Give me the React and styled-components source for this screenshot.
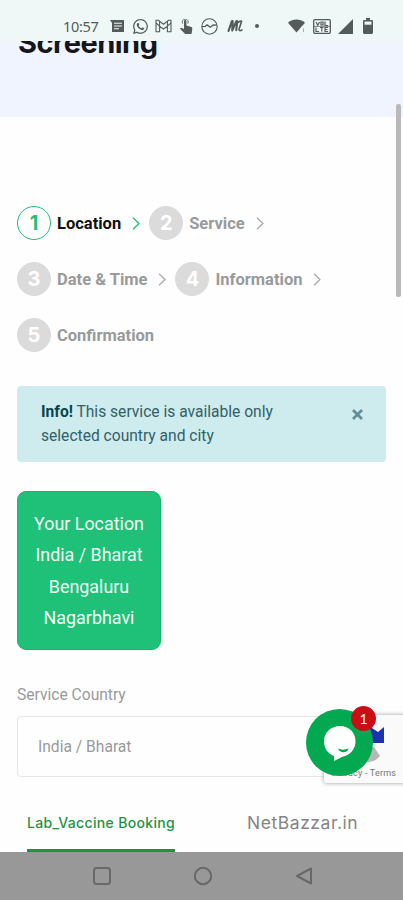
/* eslint-disable react/prop-types */
import React from 'react';
import styled, { createGlobalStyle, ThemeProvider } from 'styled-components';
import { FaWhatsapp } from 'react-icons/fa';

const theme = {
  colors: {
    accent: '#1fc077',
    muted: '#999a9b',
    circle: '#dbdbdb',
    border: '#e6e6e6',
    info: '#ceebee',
    infoText: '#326068',
    hero: '#f0f4ff',
    icon: '#555a5b',
    brand: '#1f9342',
  },
};

const GlobalStyle = createGlobalStyle`
  * { box-sizing: border-box; }

  body {
    margin: 0;
    background: #fff;
    font-family: Roboto, sans-serif;
    overflow: hidden;
  }
`;

const Screen = styled.div`
  position: relative;
  display: flex;
  flex-direction: column;
  width: 403px;
  height: 900px;
  overflow: hidden;
  background: #fefefe;
`;

const StatusBar = styled.header`
  display: flex;
  align-items: center;
  justify-content: space-between;
  flex: none;
  height: 41px;
  padding: 11px 30px 0 63px;
  color: ${({ theme }) => theme.colors.icon};
  background: #f0f7f7;
`;

const StatusGroup = styled.div`
  display: flex;
  align-items: center;
  gap: ${({ $gap }) => $gap}px;

  svg {
    display: block;
    flex: none;
  }
`;

const Clock = styled.span`
  width: 37px;
  margin-right: 3px;
  font: 400 14.5px 'Noto Sans', sans-serif;
  letter-spacing: -0.3px;
  white-space: nowrap;
`;

const Hero = styled.section`
  flex: none;
  height: 76px;
  padding-left: 18px;
  overflow: hidden;
  background: ${({ theme }) => theme.colors.hero};

  h1 {
    margin: -18px 0 0;
    color: #15161b;
    font: 700 29px/40px Inter, sans-serif;
    letter-spacing: -0.5px;
  }
`;

const Content = styled.main`
  flex: 1;
  padding: 89px 17px 0;
`;

const Steps = styled.ol`
  display: flex;
  flex-direction: column;
  gap: 22px;
  margin: 0;
  padding: 0;
`;

const StepRow = styled.div`
  display: flex;
  gap: 9px;
`;

const StepItem = styled.li`
  display: flex;
  align-items: center;
  height: 34px;
  color: ${({ $active, theme }) => ($active ? '#111' : theme.colors.muted)};
  font-size: 16.5px;
  font-weight: 700;
  white-space: nowrap;

  svg {
    margin-left: 11px;
    color: ${({ $active, theme }) => ($active ? theme.colors.accent : '#aaa')};
  }
`;

const StepCircle = styled.span`
  display: flex;
  align-items: center;
  justify-content: center;
  width: 34px;
  height: 34px;
  margin-right: 6px;
  border: 1px solid ${({ $active, theme }) => ($active ? theme.colors.accent : theme.colors.circle)};
  border-radius: 50%;
  color: ${({ $active, theme }) => ($active ? theme.colors.accent : '#fff')};
  background: ${({ $active, theme }) => ($active ? '#fff' : theme.colors.circle)};
  font: 700 20px Inter, sans-serif;
`;

const Alert = styled.div`
  display: flex;
  justify-content: space-between;
  width: 369px;
  height: 76px;
  margin-top: 34px;
  padding: 14px 23px 0 24px;
  border-radius: 4px;
  color: ${({ theme }) => theme.colors.infoText};
  background: ${({ theme }) => theme.colors.info};

  p {
    width: 250px;
    margin: 0;
    font-size: 15.6px;
    line-height: 24px;
  }

  b {
    color: #07464f;
  }

  svg {
    margin-top: 9px;
  }
`;

const LocationCard = styled.div`
  width: 144px;
  height: 159px;
  margin-top: 29px;
  padding-top: 16px;
  border: 1px solid #18b66d;
  border-radius: 9px;
  color: #effff5;
  background: ${({ theme }) => theme.colors.accent};
  font-size: 17.9px;
  line-height: 31.3px;
  text-align: center;
`;

const Label = styled.label`
  display: block;
  margin-top: 35px;
  color: ${({ theme }) => theme.colors.muted};
  font-size: 15.6px;
  line-height: 20px;
`;

const Field = styled.div`
  width: 369px;
  height: 61px;
  margin-top: 11px;
  padding-left: 20px;
  border: 1.5px solid ${({ theme }) => theme.colors.border};
  border-radius: 4px;
  color: ${({ theme }) => theme.colors.muted};
  font-size: 15.6px;
  line-height: 61px;
`;

const Tabs = styled.nav`
  display: flex;
  flex: none;
  justify-content: space-between;
  height: 58px;
  padding: 0 45px 0 27px;
  background: #fefefe;
`;

const Tab = styled.span`
  width: ${({ $width }) => $width}px;
  border-bottom: 3px solid ${({ $active, theme }) => ($active ? theme.colors.brand : 'transparent')};
  color: ${({ $active, theme }) => ($active ? theme.colors.brand : '#858585')};
  font: ${({ $active }) => ($active ? '500 14px/58px' : '400 17.5px/57px')} Inter, sans-serif;
  letter-spacing: ${({ $spacing }) => $spacing}px;
  white-space: nowrap;
`;

const NavBar = styled.footer`
  display: flex;
  align-items: center;
  flex: none;
  gap: 81px;
  height: 48px;
  padding-left: 92px;
  background: #989898;
`;

const Scrollbar = styled.div`
  position: absolute;
  top: 104px;
  right: 2px;
  width: 5px;
  height: 193px;
  border-radius: 2px;
  background: #b9b9b9;
`;

const Captcha = styled.div`
  position: absolute;
  top: 715px;
  right: -4px;
  width: 83px;
  height: 68px;
  border-radius: 3px;
  background: #fafafa;
  box-shadow: 0 0 4px #999;

  svg {
    position: absolute;
    top: 9px;
    left: 32px;
  }

  span {
    position: absolute;
    top: 52px;
    left: 8px;
    color: #777;
    font-size: 9px;
    line-height: 12px;
    letter-spacing: 0.2px;
    white-space: nowrap;
  }
`;

const ChatButton = styled.div`
  position: absolute;
  top: 709px;
  left: 306px;
  width: 67px;
  height: 67px;
  border-radius: 50%;
  background: #03a950;

  svg {
    display: block;
  }
`;

const Badge = styled.span`
  position: absolute;
  top: -3px;
  left: 45px;
  width: 25px;
  height: 25px;
  border-radius: 50%;
  color: #fff;
  background: #c90e14;
  font: 400 14px/25px Lato, sans-serif;
  text-align: center;
`;

const Chevron = () => (
  <svg width="8" height="13" viewBox="0 0 8 13" fill="none" stroke="currentColor" strokeWidth="1.3">
    <path d="M1 .8 7 6.5 1 12.2" />
  </svg>
);

const NewsIcon = () => (
  <svg width="15" height="14" viewBox="0 0 15 14">
    <path d="M0 1h14v12H2V4L0 1Z" fill="currentColor" />
    <path d="M4 4.2h8M4 7h8M4 9.8h5" stroke="#f0f7f7" strokeWidth="1.1" />
  </svg>
);

const MailIcon = () => (
  <svg width="17" height="14" viewBox="0 0 17 14" fill="none" stroke="currentColor" strokeWidth="1.1">
    <path d="M1 1.2h2.4l5.1 4 5.1-4H16v11.6h-3.6V7.2L8.5 10 4.6 7.2v5.6H1V1.2Z" />
    <path d="m1 4 3.6 3.2M16 4l-3.6 3.2M4.6 2v5M12.4 2v5" />
  </svg>
);

const TouchIcon = () => (
  <svg width="13" height="15" viewBox="0 0 13 15">
    <path d="M4 9V2.2a1.2 1.2 0 0 1 2.4 0v4.3l5 1.5c.8.3 1 .9.9 1.7L11.5 15H5.2L0 9.8l1-1.1L4 10V9Z" fill="currentColor" />
    <path d="M2.6 4.6a3 3 0 1 1 5.2 0" fill="none" stroke="currentColor" strokeWidth=".9" />
  </svg>
);

const WaveIcon = () => (
  <svg width="17" height="17" viewBox="0 0 17 17" fill="none" stroke="currentColor" strokeWidth="1.1">
    <circle cx="8.5" cy="8.5" r="7.7" />
    <path d="m1 8.6 3.2-.2 2-1.5 3 2.3 3-2.2 3.8.1" strokeWidth="1.4" />
  </svg>
);

const ScriptIcon = () => (
  <svg width="16" height="14" viewBox="0 0 16 14" fill="none" stroke="currentColor" strokeLinecap="round" strokeLinejoin="round">
    <path d="M1.5 12 4.8 2.3 5.7 2 5.2 11.5 9.5 2l.8.2-1 9" strokeWidth="2.1" />
    <path d="m10 4 3.4-2 1.2.2-2.4 7.5c-.4 2 .6 2.6 2.8 1.2" strokeWidth="1.6" />
  </svg>
);

const WifiIcon = () => (
  <svg width="18" height="14" viewBox="0 0 18 14">
    <path d="M0 3.8C5-.6 11.8-.6 17 3.8L8.5 13.6 0 3.8Z" fill="currentColor" />
    <path d="M12.5 13.5v-4l1.5-1.7 1.5 1.7v4M14 7.8V14" fill="none" stroke="#f0f7f7" strokeWidth="1" />
    <path d="M15.5 9.5v3.5" stroke="#aaa" />
  </svg>
);

const VolteIcon = () => (
  <svg width="18" height="15" viewBox="0 0 18 15" fill="none">
    <rect x=".7" y=".7" width="16.6" height="13.6" rx="1" stroke="currentColor" strokeWidth="1.3" />
    <path d="m3 3 1.8 3.2L6.5 3M8 3h2v3H8V3Zm4-.5v4h3M3 8.5v4h3m1-4h3.5m-1.7 0v4M15 8.5h-3v4h3m-3-2h2.5" stroke="currentColor" strokeWidth="1.2" />
    <path d="M1 7.4h16" stroke="currentColor" strokeWidth=".7" />
  </svg>
);

const SignalIcon = () => (
  <svg width="15" height="15" viewBox="0 0 15 15">
    <path d="M15 0v15H0L15 0Z" fill="currentColor" />
  </svg>
);

const BatteryIcon = () => (
  <svg width="13" height="16" viewBox="-3 0 13 16">
    <path d="M3 0h4v2h2.2l.8.8V15l-1 1H1l-1-1V2.8L.8 2H3V0Z" fill="currentColor" />
    <path d="M1.5 3.5h7v3.2h-7z" fill="#edf1f1" />
  </svg>
);

const CloseIcon = () => (
  <svg width="11" height="11" viewBox="0 0 11 11" fill="none" stroke="#628d92" strokeWidth="2.7">
    <path d="m1 1 9 9M10 1l-9 9" />
  </svg>
);

const steps = [
  [{ id: 1, label: 'Location', active: true }, { id: 2, label: 'Service' }],
  [{ id: 3, label: 'Date & Time' }, { id: 4, label: 'Information' }],
  [{ id: 5, label: 'Confirmation', last: true }],
];

const Step = ({ id, label, active, last }) => (
  <StepItem $active={active}>
    <StepCircle $active={active}>{id}</StepCircle>
    {label}
    {!last && <Chevron />}
  </StepItem>
);

const App = () => (
  <ThemeProvider theme={theme}>
    <GlobalStyle />
    <Screen>
      <StatusBar>
        <StatusGroup $gap={7.3}>
          <Clock>10:57</Clock>
          <StatusGroup $gap={6.5}>
            <NewsIcon />
            <FaWhatsapp size={17} />
            <MailIcon />
          </StatusGroup>
          <StatusGroup $gap={8.5}>
            <TouchIcon />
            <WaveIcon />
            <ScriptIcon />
          </StatusGroup>
          <svg width="20" height="6" viewBox="0 0 20 6"><circle cx="7" cy="3" r="2" fill="currentColor" /></svg>
        </StatusGroup>
        <StatusGroup $gap={7}>
          <WifiIcon />
          <VolteIcon />
          <SignalIcon />
          <BatteryIcon />
        </StatusGroup>
      </StatusBar>

      <Hero>
        <h1>Screening</h1>
      </Hero>

      <Content>
        <Steps>
          {steps.map((row) => (
            <StepRow key={row[0].id}>
              {row.map((step) => <Step key={step.id} {...step} />)}
            </StepRow>
          ))}
        </Steps>

        <Alert>
          <p><b>Info!</b> This service is available only selected country and city</p>
          <CloseIcon />
        </Alert>

        <LocationCard>
          <div>Your Location</div>
          <div>India / Bharat</div>
          <div>Bengaluru</div>
          <div>Nagarbhavi</div>
        </LocationCard>

        <Label>Service Country</Label>
        <Field>India / Bharat</Field>
      </Content>

      <Tabs>
        <Tab $active $width={148} $spacing={0.34}>Lab_Vaccine Booking</Tab>
        <Tab $width={111} $spacing={0.55}>NetBazzar.in</Tab>
      </Tabs>

      <NavBar>
        <svg width="20" height="20" viewBox="0 0 20 20" fill="none" stroke="#686868" strokeWidth="2">
          <rect x="2" y="2" width="16" height="16" rx="2.5" />
        </svg>
        <svg width="20" height="20" viewBox="0 0 20 20" fill="none" stroke="#686868" strokeWidth="2">
          <circle cx="10" cy="10" r="8.2" />
        </svg>
        <svg width="20" height="20" viewBox="0 0 20 20" fill="none" stroke="#686868" strokeWidth="2" strokeLinejoin="round">
          <path d="M17 2.5v15L3 10l14-7.5Z" />
        </svg>
      </NavBar>

      <Scrollbar />

      <Captcha>
        <svg width="32" height="40" viewBox="0 0 32 40">
          <path d="M13 2 22 8l6-5v16H15L7 11l6-9Z" fill="#1c32b0" />
          <path d="M8 24 18 23l6 9c-4 5-10 7-16 6V24Z" fill="#b7b7b7" />
        </svg>
        <span>Privacy - Terms</span>
      </Captcha>

      <ChatButton>
        <svg width="67" height="67" viewBox="0 0 67 67">
          <path d="M34 17c9 0 15.5 6.5 15.5 15.3 0 8.5-6 14.2-13 15.5L28 52v-5c-6-2.3-10-7.5-10-14.7C18 23.5 25 17 34 17Z" fill="#fff" />
          <path d="M32 39.5c2.8 1.5 7 1.5 10.5 0-.8 5-9 5-10.5 0Z" fill="#03a950" />
        </svg>
        <Badge>1</Badge>
      </ChatButton>
    </Screen>
  </ThemeProvider>
);

export default App;
